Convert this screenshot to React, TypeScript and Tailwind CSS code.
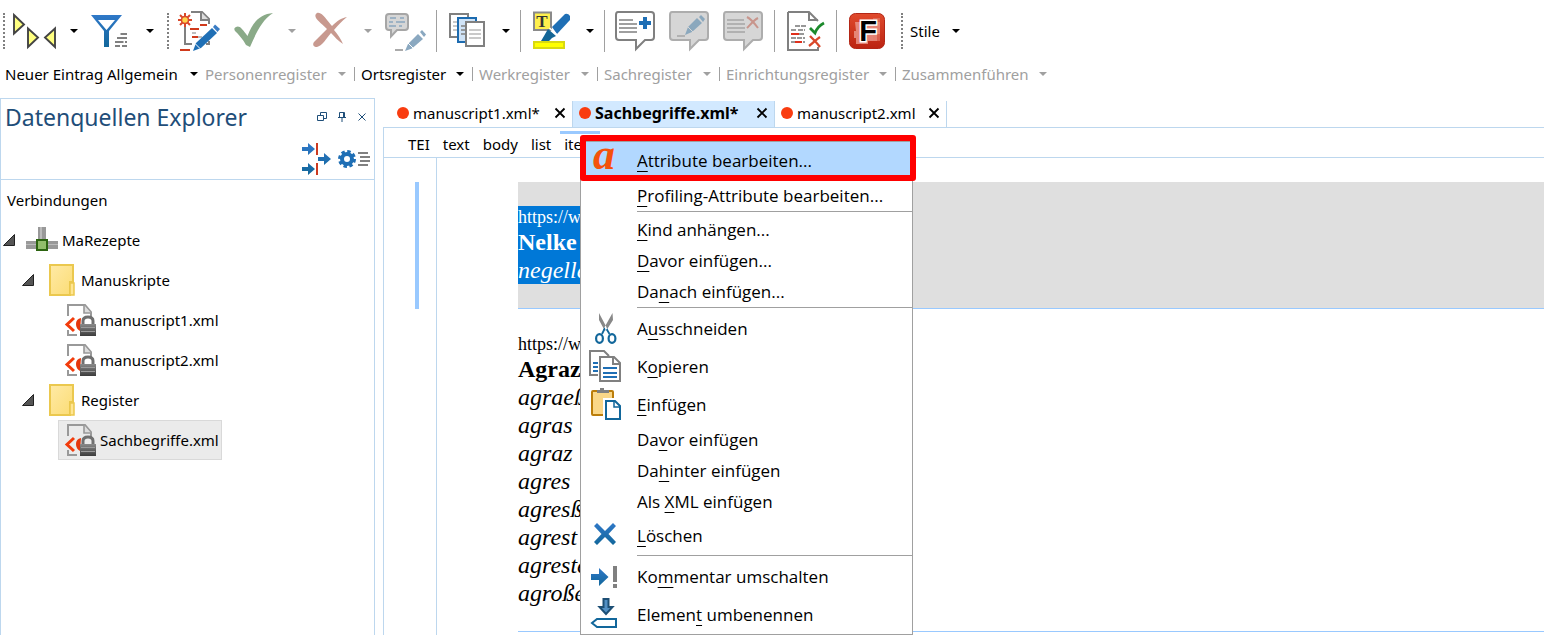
import type { ReactNode } from "react";

const blue = "#1f6fb5";
const gray = "#808080";

type IconProps = { box: string; className?: string; children: ReactNode };

function Icon({ box, className = "h-10 w-12", children }: IconProps) {
  return (
    <svg viewBox={box} className={`shrink-0 overflow-visible ${className}`} fill="none" aria-hidden="true">
      {children}
    </svg>
  );
}

function Caret({ disabled = false }: { disabled?: boolean }) {
  return (
    <svg viewBox="0 0 8 4" className="h-1 w-2 shrink-0" aria-hidden="true">
      <path d="M0 0H8L4 4Z" fill={disabled ? "#a0a0a0" : "#000"} />
    </svg>
  );
}

function Handle() {
  return (
    <span className="flex w-4 shrink-0 justify-center">
      <span className="h-9 border-l-2 border-dotted border-[#808080]" />
    </span>
  );
}

function Separator() {
  return (
    <span className="flex w-2 shrink-0 justify-center">
      <span className="h-[42px] w-px bg-[#a0a0a0]" />
    </span>
  );
}

function Tool({ label, width = "w-[54px]", children }: { label: string; width?: string; children: ReactNode }) {
  return (
    <button type="button" aria-label={label} className={`flex h-12 shrink-0 items-center justify-center ${width}`}>
      {children}
    </button>
  );
}

function SplitTool({ label, disabled, children }: { label: string; disabled?: boolean; children: ReactNode }) {
  return (
    <div className="flex shrink-0">
      <Tool label={label} width="w-14">
        {children}
      </Tool>
      <button type="button" aria-label={`${label} Optionen`} className="flex h-12 w-5 items-center justify-center">
        <Caret disabled={disabled} />
      </button>
    </div>
  );
}

function Defs() {
  return (
    <svg className="absolute h-0 w-0" aria-hidden="true">
      <defs>
        <linearGradient id="gBlue" x1="0" y1="0" x2="0" y2="1">
          <stop offset="0" stopColor="#2f78c8" />
          <stop offset="1" stopColor="#12679b" />
        </linearGradient>
        <linearGradient id="gRed" x1="0" y1="0" x2="0" y2="1">
          <stop offset="0" stopColor="#e04a2c" />
          <stop offset="1" stopColor="#bb2412" />
        </linearGradient>
        <linearGradient id="gFolder" x1="0" y1="0" x2="1" y2="1">
          <stop offset="0" stopColor="#ffeaa6" />
          <stop offset="1" stopColor="#fbdc74" />
        </linearGradient>
        <linearGradient id="gLock" x1="0" y1="0" x2="0" y2="1">
          <stop offset="0" stopColor="#8a8a8a" />
          <stop offset="1" stopColor="#3c3c3c" />
        </linearGradient>
      </defs>
    </svg>
  );
}

function MainToolbar() {
  return (
    <div className="flex h-[62px] shrink-0 items-center" role="toolbar" aria-label="Werkzeuge">
      <span className="flex w-2 shrink-0 justify-center">
        <span className="h-9 border-l-2 border-dotted border-[#808080]" />
      </span>
      <SplitTool label="Tags anzeigen">
        <Icon box="12 11 48 40">
          <g fill="#ffff80" stroke="#444" strokeWidth="1.9">
            <path d="M14 15L24 24.500L14 33.500Z" />
            <path d="M28 28.500L38 37.500L28 47Z" />
            <path d="M55 28.500L45 37.500L55 47Z" />
          </g>
        </Icon>
      </SplitTool>
      <SplitTool label="Filter">
        <Icon box="88 11 48 40">
          <path fillRule="evenodd" d="M91 15H122L109 31V47H104V31ZM98 20L106.500 30L115 20Z" fill="url(#gBlue)" />
          <path d="M120.500 34H127M117 38H127M115 42H123.500M125 42H127M115 46H120M122 46H127" stroke={gray} strokeWidth="2" />
        </Icon>
      </SplitTool>
      <Handle />
      <Tool label="Dokument bearbeiten" width="w-12">
        <Icon box="176 11 48 40">
          <path d="M191 12H202L209 19V24M185 26V44H192M206 44H209V41" stroke={gray} strokeWidth="2" />
          <path d="M201 12V20H209" stroke={gray} strokeWidth="2" fill="#ddd" />
          <path d="M200 25H206M191 29H197M192 37H202M192 33H196" stroke="#a9a9a9" strokeWidth="1.600" />
          <path d="M200 25H207M190 29H199M192 37H198M180 50H190" stroke="#d03a1c" strokeWidth="2" />
          <path d="M185 13V27M178 20H192M180 15L190 25M190 15L180 25" stroke="#d9482a" strokeWidth="2" />
          <circle cx="185" cy="20" r="3.500" fill="#ffd34d" stroke="#d9482a" strokeWidth="1.500" />
          <path d="M193 51L196 43L212 28L217 33L201 48Z" fill="#1f6fb5" />
          <path d="M213 27L215 24.500L220 29L217.500 32Z" fill="#3a7cc4" />
          <path d="M195.500 44L200 48.500" stroke="#fff" />
        </Icon>
      </Tool>
      <div className="ml-0.5 flex shrink-0 items-center">
        <SplitTool label="Annehmen" disabled>
          <Icon box="230 11 48 40">
            <path d="M236 27C239 25 242 28 247.500 36C253 22 260 14 273 13C262 20 256 33 250 47L246 45C243 39 238 34 235 31C234 29 234 28 236 27Z" fill="#8aaa88" />
          </Icon>
        </SplitTool>
        <SplitTool label="Ablehnen" disabled>
          <Icon box="306 11 48 40">
            <path d="M317 13C322 11 328 22 332 26C337 21 341 18 347 17C342 21 338 25 334 30C338 35 341 39 343 44C338 41 335 37 331 33C326 39 322 46 317 47C314 47 312 45 314 42L327 29C323 25 318 21 316 18C315 16 315 14 317 13Z" fill="#c8998f" />
          </Icon>
        </SplitTool>
      </div>
      <Tool label="Kommentar bearbeiten">
        <Icon box="381 11 48 40">
          <path d="M389 14H405Q408 14 408 17V27Q408 30 405 30H397L391 36.500V30H389Q386 30 386 27V17Q386 14 389 14Z" fill="#d6d6d6" stroke="#a6a6a6" strokeWidth="2" />
          <path d="M390 18H396M400 18H404M389 22H393M396 22H405M389 26H396M399 26H402" stroke="#8ba6bf" strokeWidth="1.600" />
          <path d="M395 50H403" stroke="#aaa" strokeWidth="2" />
          <path d="M405 51L408 44L418 34L423 39L412 48.500Z" fill="#8aa8c0" />
          <path d="M420 32L422 30L426 34.500L424 37Z" fill="#8aa8c0" />
          <path d="M408 43L413 48" stroke="#fff" />
        </Icon>
      </Tool>
      <Separator />
      <SplitTool label="Dokumente">
        <Icon box="444 11 48 40">
          <path d="M450 14H468V37H450Z" fill="#fff" stroke={gray} strokeWidth="2" />
          <path d="M453 22H458M453 26H458M453 30H458" stroke="#b8b8b8" strokeWidth="1.600" />
          <path d="M458 18H476V42H458Z" fill="#cfe3f7" stroke="#1c6bb0" strokeWidth="2" />
          <path d="M461 26H466M461 30H466M461 34H466" stroke={gray} strokeWidth="1.600" />
          <path d="M466 22H484V46H466Z" fill="#fff" stroke={gray} strokeWidth="2" />
          <path d="M469 30H481M469 34H481M469 38H481" stroke="#b8b8b8" strokeWidth="1.600" />
        </Icon>
      </SplitTool>
      <Separator />
      <SplitTool label="Hervorheben">
        <Icon box="528 11 48 40">
          <path d="M534 12.500H551V30H534Z" fill="#fff04d" stroke="#8a8a8a" strokeWidth="2" />
          <text x="542" y="27" textAnchor="middle" fontFamily="Liberation Serif, serif" fontSize="17" fontWeight="bold" fill="#333">
            T
          </text>
          <path d="M552 27L565 14Q568 13 570 16V20L557 34Z" fill="#1f6fb5" />
          <path d="M548 29L556 36L552 38L549 41H541L544 36Z" fill="#146596" />
          <path d="M549.500 28L557 35" stroke="#fff" strokeWidth="1.500" />
          <path d="M534 42H564V48H534Z" fill="#ffff00" stroke="#d9d911" strokeWidth="2" />
        </Icon>
      </SplitTool>
      <Separator />
      <Tool label="Kommentar hinzufügen">
        <Icon box="611 11 48 40">
          <path d="M618 12H651Q654 12 654 15V37Q654 40 651 40H645L636 49V40H619Q616 40 616 37V15Q616 12 618 12Z" fill="#fff" stroke={gray} strokeWidth="2" />
          <path d="M619 20H633M619 24H637M619 28H637M619 32H637" stroke={gray} strokeWidth="1.500" />
          <path d="M645 17V29M639 23H651" stroke={blue} strokeWidth="4" />
        </Icon>
      </Tool>
      <Tool label="Kommentar ändern">
        <Icon box="665 11 48 40">
          <path d="M672 12H705Q708 12 708 15V37Q708 40 705 40H699L690 49V40H673Q670 40 670 37V15Q670 12 672 12Z" fill="#d6d6d6" stroke="#adadad" strokeWidth="2" />
          <path d="M677 36H685" stroke="#a5a5a5" strokeWidth="1.500" />
          <path d="M685 35L688 27L697 18L702 23L692 32Z" fill="#8ba8bd" />
          <path d="M699 17L701 15L705 19L703 22Z" fill="#8ba8bd" />
          <path d="M688 27L693 32" stroke="#d6d6d6" />
        </Icon>
      </Tool>
      <Tool label="Kommentar löschen">
        <Icon box="719 11 48 40">
          <path d="M726 12H759Q762 12 762 15V37Q762 40 759 40H753L744 49V40H727Q724 40 724 37V15Q724 12 726 12Z" fill="#d6d6d6" stroke="#adadad" strokeWidth="2" />
          <path d="M727 20H744M727 24H745M727 28H745M727 32H745" stroke="#a5a5a5" strokeWidth="1.500" />
          <path d="M747 17C751 19 755 24 758 28M758 18C754 20 750 25 747 28" stroke="#c8958c" strokeWidth="2" />
        </Icon>
      </Tool>
      <Separator />
      <Tool label="Validieren">
        <Icon box="781 11 48 40">
          <path d="M788 12H809L818 21M788 12V50H818V47M809 12V20H818" stroke={gray} strokeWidth="2" />
          <path d="M795 26H807M791 30H796M798 30H805M799 34H805M791 38H805M791 42H795M803 42H805" stroke="#777" strokeWidth="1.600" strokeDasharray="5 1" />
          <path d="M791 34H799M795 42H802" stroke="#e0301c" strokeWidth="2" />
          <path d="M810 28L815 33C817 28 820 25 824 23" stroke="#1c8a2c" strokeWidth="2.800" />
          <path d="M810 36C813 39 817 43 820 47M820 37C817 39 813 43 809 46" stroke="#d9482a" strokeWidth="2.300" />
        </Icon>
      </Tool>
      <Separator />
      <Tool label="Framework">
        <Icon box="843 11 48 40">
          <rect x="849.500" y="13.500" width="35" height="35" rx="6" fill="url(#gRed)" stroke="#b32716" />
          <path d="M855 22H880V34H877V41H868V44H856V38H854V31H856Z" fill="#eda196" opacity=".75" />
          <path d="M873 18H880V41H873Z" fill="#e57e6e" opacity=".6" />
          <text x="868" y="41" textAnchor="middle" fontFamily="Liberation Sans, sans-serif" fontSize="29" fontWeight="bold" fill="#000" stroke="#fff" strokeWidth="3" paintOrder="stroke">
            F
          </text>
        </Icon>
      </Tool>
      <Handle />
      <button type="button" className="flex items-center gap-3 text-[15px]">
        Stile <Caret />
      </button>
    </div>
  );
}

const registers = [
  { label: "Neuer Eintrag Allgemein", width: "w-[200px]", enabled: true, rule: false },
  { label: "Personenregister", width: "w-[148px]", enabled: false, rule: false },
  { label: "Ortsregister", width: "w-[118px]", enabled: true, rule: true },
  { label: "Werkregister", width: "w-[125px]", enabled: false, rule: true },
  { label: "Sachregister", width: "w-[122px]", enabled: false, rule: true },
  { label: "Einrichtungsregister", width: "w-[176px]", enabled: false, rule: true },
  { label: "Zusammenführen", width: "w-[160px]", enabled: false, rule: true },
];

function RegisterBar() {
  return (
    <div className="flex h-6 shrink-0 items-center text-[15px]">
      {registers.map((r) => (
        <button
          key={r.label}
          type="button"
          disabled={!r.enabled}
          className={`flex shrink-0 items-center justify-between pr-[2px] ${r.width} ${r.enabled ? "text-black" : "text-[#a0a0a0]"}`}
        >
          <span className="flex items-center whitespace-nowrap">
            <span className={`h-3.5 w-px ${r.rule ? "mx-1.5 bg-[#a0a0a0]" : "mr-1"}`} />
            {r.label}
          </span>
          <Caret disabled={!r.enabled} />
        </button>
      ))}
    </div>
  );
}

function Twisty() {
  return (
    <svg viewBox="0 0 12 12" className="h-3 w-3 shrink-0" aria-hidden="true">
      <path d="M11.500 .5V11.500H.5Z" fill="#555" stroke="#222" />
    </svg>
  );
}

function FolderIcon() {
  return (
    <Icon box="0 0 26 32" className="h-8 w-[26px]">
      <path d="M1 1H24V18H21V31H1Z" fill="url(#gFolder)" stroke="#ebc84e" strokeWidth="2" />
      <path d="M21 31V19H25V31Z" fill="#ffe694" stroke="#ebc84e" strokeWidth="1.500" />
    </Icon>
  );
}

function XmlIcon() {
  return (
    <Icon box="0 0 32 32" className="h-8 w-8">
      <path d="M3 12V1H20L26 8V14M3 26V31H12" stroke="#999" strokeWidth="2" />
      <path d="M19 1V9H26" fill="#ddd" stroke="#999" strokeWidth="1.600" />
      <path d="M9 14L2 20.500L9 27" stroke="#f23c0c" strokeWidth="3" />
      <path d="M16 14Q11 15 11 20Q11 25 15 27Z" fill="#e5360c" />
      <path d="M18 20V17Q18 13 23 13Q28 13 28 17V20" stroke="#707070" strokeWidth="3" />
      <path d="M15 20H31V32H15Z" fill="url(#gLock)" />
      <path d="M16 23.500H30M16 27.500H30" stroke="#9a9a9a" />
    </Icon>
  );
}

function DatabaseIcon() {
  return (
    <Icon box="0 0 32 26" className="h-[26px] w-8">
      <path d="M12 0H20V13H12ZM0 14H32V22H0Z" fill="#999" />
      <path d="M14 0H16V12H14ZM0 17H32V18H0Z" fill="#bbb" />
      <path d="M11 13H21V23H11Z" fill="#92bd6b" stroke="#2c6410" strokeWidth="2" />
    </Icon>
  );
}

function FileRow({ name, selected = false }: { name: string; selected?: boolean }) {
  return (
    <li className="pl-[57px]">
      <button
        type="button"
        className={`flex h-10 items-center gap-[3px] border pl-1.5 pr-0.5 ${selected ? "border-[#d9d9d9] bg-[#ebebeb]" : "border-transparent"}`}
      >
        <XmlIcon />
        <span>{name}</span>
      </button>
    </li>
  );
}

function FolderRow({ name }: { name: string }) {
  return (
    <button type="button" className="flex h-10 items-center pl-[21px]">
      <Twisty />
      <span className="ml-[15px] mr-1.5">
        <FolderIcon />
      </span>
      {name}
    </button>
  );
}

function Explorer() {
  return (
    <aside className="w-[375px] shrink-0 border border-b-0 border-[#bdd7ee] text-[15px]">
      <header className="flex h-[81px] flex-col justify-between border-b border-[#bdd7ee]">
        <div className="flex items-center justify-between pl-1 pr-1.5">
          <h2 className="text-[23px] leading-9 text-[#1f4e79]">Datenquellen Explorer</h2>
          <div className="flex items-center gap-2">
            <button type="button" aria-label="Ablösen">
              <Icon box="0 0 12 12" className="h-3 w-3">
                <path d="M1.500 4.500H7.500V9.500H1.500ZM4.500 4V1.500H10.500V7.500H8" stroke="#1f4e79" />
              </Icon>
            </button>
            <button type="button" aria-label="Anheften">
              <Icon box="0 0 12 12" className="h-3 w-3">
                <path d="M3.500 1.500H8.500V6.500H3.500ZM2 6.500H10M6 7V11M7.500 2V6" stroke="#1f4e79" />
              </Icon>
            </button>
            <button type="button" aria-label="Schließen">
              <Icon box="0 0 12 12" className="h-3 w-3">
                <path d="M2.500 2.500L9.500 9.500M9.500 2.500L2.500 9.500" stroke="#1f4e79" />
              </Icon>
            </button>
          </div>
        </div>
        <div className="flex items-center justify-end gap-1 pb-1 pr-[3px]">
          <button type="button" aria-label="Verbindungen umschalten">
            <Icon box="0 0 32 32" className="h-8 w-8">
              <path d="M1 4H7V0L14 6L7 12V8H1ZM17 14H23V10L30 16L23 22V18H17ZM1 24H7V20L14 26L7 32V28H1Z" fill="url(#gBlue)" />
              <path d="M16 0V12M16 20V32" stroke="#cc3a20" strokeWidth="2" />
            </Icon>
          </button>
          <button type="button" aria-label="Einstellungen">
            <Icon box="0 0 34 20" className="h-5 w-[34px]">
              <circle cx="10" cy="10" r="5" stroke={blue} strokeWidth="4" />
              <circle cx="10" cy="10" r="7.500" stroke={blue} strokeWidth="3" strokeDasharray="3.400 2.490" />
              <path d="M21 4H31M23 8H33M23 12H33M21 16H31" stroke={gray} strokeWidth="1.800" />
            </Icon>
          </button>
        </div>
      </header>
      <h3 className="flex h-10 items-center pl-1.5">Verbindungen</h3>
      <ul>
        <li>
          <button type="button" className="flex h-10 items-center pl-0.5">
            <Twisty />
            <span className="ml-[11px] mr-1">
              <DatabaseIcon />
            </span>
            MaRezepte
          </button>
          <ul>
            <li>
              <FolderRow name="Manuskripte" />
              <ul>
                <FileRow name="manuscript1.xml" />
                <FileRow name="manuscript2.xml" />
              </ul>
            </li>
            <li>
              <FolderRow name="Register" />
              <ul>
                <FileRow name="Sachbegriffe.xml" selected />
              </ul>
            </li>
          </ul>
        </li>
      </ul>
    </aside>
  );
}

function Tab({ name, width, active = false }: { name: string; width: string; active?: boolean }) {
  return (
    <div
      className={`flex h-[26px] shrink-0 items-center justify-between border-r border-[#bdd7ee] px-1.5 pb-0.5 ${width} ${active ? "bg-[#d2e9ff] text-base font-bold" : "text-[15px]"}`}
    >
      <button type="button" className="flex items-center gap-1 whitespace-nowrap">
        <span className="h-3 w-3 rounded-full bg-[#f93c10]" />
        {name}
      </button>
      <button type="button" aria-label={`${name} schließen`}>
        <Icon box="0 0 12 12" className="h-3 w-3">
          <path d="M1.500 1.500L10.500 10.500M10.500 1.500L1.500 10.500" stroke="#000" strokeWidth="1.800" />
        </Icon>
      </button>
    </div>
  );
}

type Entry = { label: string; icon?: ReactNode; active?: boolean };

function MenuIcon({ box, children }: { box: string; children: ReactNode }) {
  return (
    <Icon box={box} className="h-9 w-9">
      {children}
    </Icon>
  );
}

const groups: Entry[][] = [
  [
    {
      label: "_A_ttribute bearbeiten...",
      active: true,
      icon: (
        <MenuIcon box="587 143 36 36">
          <text x="604" y="169" textAnchor="middle" fontFamily="Liberation Serif, serif" fontSize="44" fontWeight="bold" fontStyle="italic" fill="#f4510b">
            a
          </text>
        </MenuIcon>
      ),
    },
    { label: "_P_rofiling-Attribute bearbeiten..." },
  ],
  [{ label: "_K_ind anhängen..." }, { label: "_D_avor einfügen..." }, { label: "Da_n_ach einfügen..." }],
  [
    {
      label: "A_u_sschneiden",
      icon: (
        <MenuIcon box="587 311 36 36">
          <path d="M599 313L608 330L605 331L599 320ZM612.500 313L603 330L606 331L613 320Z" fill="#888" />
          <path d="M605 328L602 334M606 328L609.500 334" stroke="#12679b" strokeWidth="1.800" />
          <ellipse cx="599.500" cy="338.500" rx="3.400" ry="4.300" stroke="#12679b" strokeWidth="2.200" />
          <ellipse cx="612" cy="338.500" rx="3.400" ry="4.300" stroke="#12679b" strokeWidth="2.200" />
          <circle cx="606" cy="328.500" r="1" fill="#fff" />
        </MenuIcon>
      ),
    },
    {
      label: "K_o_pieren",
      icon: (
        <MenuIcon box="587 349 36 36">
          <path d="M598 375H590V351H604L609 356" stroke={gray} strokeWidth="2" />
          <path d="M593 363H598M593 367H598M593 371H598" stroke={blue} strokeWidth="2" />
          <path d="M600 357H614L620 363V381H600Z" fill="#fff" stroke={gray} strokeWidth="2" />
          <path d="M613 357V364H620" stroke={gray} strokeWidth="2" />
          <path d="M603 368H617M603 373H617M603 377H617" stroke={blue} strokeWidth="1.800" />
        </MenuIcon>
      ),
    },
    {
      label: "_E_infügen",
      icon: (
        <MenuIcon box="587 387 36 36">
          <rect x="592" y="391" width="21" height="24" rx="1" fill="#fad788" stroke="#bb7d0a" strokeWidth="2" />
          <path d="M597 390H600V388H604V390H609V393H597Z" fill={gray} />
          <path d="M603 398H622V421H603Z" fill="#fff" />
          <path d="M606 401H615L620 406V419H606Z" fill="#fff" stroke="#12679b" strokeWidth="2" />
          <path d="M614 401V407H620" stroke="#12679b" strokeWidth="1.500" />
        </MenuIcon>
      ),
    },
    { label: "Da_v_or einfügen" },
    { label: "Da_h_inter einfügen" },
    { label: "Als _X_ML einfügen" },
    {
      label: "_L_öschen",
      icon: (
        <MenuIcon box="587 518 36 36">
          <path d="M597 523L605 531L613 523L616 526L608.500 534L616 542L613 545L605 537L597 545L594 542L601.500 534L594 526Z" fill="url(#gBlue)" />
        </MenuIcon>
      ),
    },
  ],
  [
    {
      label: "Ko_m_mentar umschalten",
      icon: (
        <MenuIcon box="587 559 36 36">
          <path d="M591 574H599V568L608.500 577L599 586V580H591Z" fill="url(#gBlue)" />
          <path d="M613 566H617V582H613ZM613 584H617V588H613Z" fill={gray} />
        </MenuIcon>
      ),
    },
    {
      label: "Elemen_t_ umbenennen",
      icon: (
        <MenuIcon box="587 597 36 36">
          <path d="M603.500 599H608.500V607H612.500L606 614L599.500 607H603.500Z" fill="#5290c4" stroke="#1d4f75" strokeWidth="2" />
          <path d="M597 619H616V627H597L592 623Z" fill="#fff" stroke="#12679b" strokeWidth="2" />
        </MenuIcon>
      ),
    },
  ],
];

function ContextMenu() {
  return (
    <div role="menu" className="absolute left-[197px] top-[43px] z-10 w-[333px] border border-[#a0a0a0] bg-white font-['Open_Sans','Noto_Sans',sans-serif] text-[17px]">
      {groups.map((entries, g) => (
        <div key={g}>
          {g > 0 && <hr className="mb-0.5 ml-14 border-t border-[#a0a0a0]" />}
          {entries.map(({ label, icon, active }) => {
            const [before, key, after] = label.split("_");
            return (
              <button
                key={label}
                type="button"
                role="menuitem"
                className={`flex w-full items-center ${icon ? "h-[38px]" : "h-[31px]"} ${active ? "bg-[#b2d8ff]" : ""}`}
              >
                <span className="flex w-14 shrink-0 pl-1.5">{icon}</span>
                <span className="whitespace-pre">
                  {before}
                  <span className="underline decoration-1 underline-offset-4">{key}</span>
                  {after}
                </span>
              </button>
            );
          })}
        </div>
      ))}
    </div>
  );
}

const variants = ["agraeß", "agras", "agraz", "agres", "agresß", "agrest", "agreste", "agroße"];

function Editor() {
  return (
    <main className="relative ml-2 flex min-w-0 flex-1 flex-col">
      <div className="mt-[3px] flex shrink-0 pl-2">
        <Tab name="manuscript1.xml*" width="w-[182px]" />
        <Tab name="Sachbegriffe.xml*" width="w-[202px]" active />
        <Tab name="manuscript2.xml" width="w-[172px]" />
      </div>
      <div className="flex min-h-0 flex-1 flex-col border-l border-t border-[#bdd7ee]">
        <nav className="flex h-[30px] shrink-0 gap-[5px] border-b border-[#bdd7ee] pl-5 pt-[3px] text-[15px] leading-5">
          {["TEI", "text", "body", "list", "ite"].map((n) => (
            <a
              key={n}
              href="#"
              className={`h-6 border-t-[3px] px-1 ${n === "ite" ? "w-10 border-[#99c9ff]" : "border-transparent"}`}
            >
              {n}
            </a>
          ))}
        </nav>
        <div className="flex min-h-0 flex-1">
          <div className="w-[53px] shrink-0 border-r border-[#bdd7ee] pl-[31px] pt-6">
            <div className="h-[127px] w-1 bg-[#99c9ff]" />
          </div>
          <div className="min-w-0 flex-1 pl-[81px] pt-6 font-['Liberation_Serif',serif] text-2xl leading-7 text-black">
            <section className="border-b border-[#99c9ff] bg-[#dfdfdf] py-6">
              <div className="w-44 bg-[#0078d7] text-white">
                <p className="text-lg leading-[22px]">https://w</p>
                <p className="font-bold">Nelke</p>
                <p className="italic">negelle</p>
              </div>
            </section>
            <section className="border-b border-[#99c9ff] pb-6 pt-6">
              <p className="text-lg leading-[22px]">https://w</p>
              <p className="font-bold">Agraz</p>
              {variants.map((v) => (
                <p key={v} className="italic">
                  {v}
                </p>
              ))}
            </section>
          </div>
        </div>
      </div>
      <ContextMenu />
      <div className="pointer-events-none absolute left-[197px] top-[37px] z-20 h-[46px] w-[336px] rounded-[3px] border-[6px] border-[#ff0000]" />
    </main>
  );
}

export default function App() {
  return (
    <div className="flex h-screen flex-col overflow-hidden bg-white font-['Noto_Sans','Open_Sans',sans-serif] text-black">
      <Defs />
      <MainToolbar />
      <RegisterBar />
      <div className="mt-3 flex min-h-0 flex-1">
        <Explorer />
        <Editor />
      </div>
    </div>
  );
}
